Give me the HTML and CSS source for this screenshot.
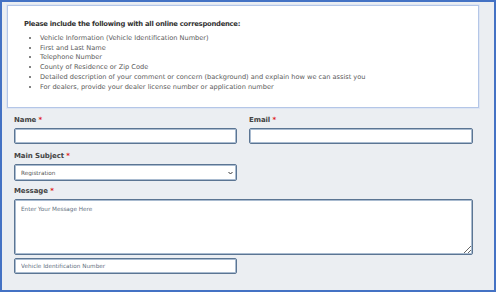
FILE: index.html
```html
<!DOCTYPE html>
<html>
<head>
    <title>Contact Us</title>
    <link rel="stylesheet" href="styles.css">
</head>
<body>
    <div class="frame">
        <div class="notice">
            <h4>Please include the following with all online correspondence:</h4>
            <ul>
                <li>Vehicle Information (Vehicle Identification Number)</li>
                <li>First and Last Name</li>
                <li>Telephone Number</li>
                <li>County of Residence or Zip Code</li>
                <li>Detailed description of your comment or concern (background) and explain how we can assist you</li>
                <li>For dealers, provide your dealer license number or application number</li>
            </ul>
        </div>
        <form class="contact-form">
            <div class="row">
                <div class="field">
                    <label for="name">Name <span class="req">*</span></label>
                    <input type="text" id="name" />
                </div>
                <div class="field">
                    <label for="email">Email <span class="req">*</span></label>
                    <input type="email" id="email" />
                </div>
            </div>
            <div class="row">
                <div class="field">
                    <label for="subject">Main Subject <span class="req">*</span></label>
                    <div class="select-wrap">
                        <select id="subject">
                            <option>Registration</option>
                            <option>Title</option>
                            <option>Dealer Services</option>
                        </select>
                        <svg class="caret" width="5" height="4" viewBox="0 0 5 4"><path d="M0.5 1 L2.5 3 L4.5 1" fill="none" stroke="#333" stroke-width="1"/></svg>
                    </div>
                </div>
            </div>
            <div class="field">
                <label for="message">Message <span class="req">*</span></label>
                <textarea id="message" placeholder="Enter Your Message Here"></textarea>
            </div>
            <div class="row">
                <div class="field">
                    <input type="text" id="vin" placeholder="Vehicle Identification Number" />
                </div>
            </div>
        </form>
    </div>
</body>
</html>
```

FILE: styles.css
```css
body {
    margin: 0;
    font-family: "DejaVu Sans", Verdana, sans-serif;
}
.frame {
    box-sizing: border-box;
    width: 496px;
    height: 292px;
    border: 2px solid #4472c4;
    background-color: #ebeef2;
    padding: 3px 15px 0 5px;
}
.notice {
    background-color: #fff;
    border: 1px solid #b4c6e7;
    box-shadow: 0 0 0 1px #dde5f3;
    height: 103px;
    box-sizing: border-box;
    padding: 14px 16px 0 16px;
}
.notice h4 {
    margin: 0 0 6px 0;
    font-size: 6.8px;
    letter-spacing: -0.25px;
    color: #333;
}
.notice ul {
    margin: 0;
    padding-left: 16px;
    list-style: disc;
}
.notice li {
    font-size: 6.6px;
    color: #5a5a5a;
    line-height: 9.7px;
}
.contact-form {
    padding: 8px 0 0 7px;
}
.row {
    display: grid;
    grid-template-columns: 223px 224px;
    column-gap: 12px;
}
.field {
    display: flex;
    flex-direction: column;
}
label {
    font-size: 7px;
    font-weight: bold;
    letter-spacing: -0.1px;
    color: #444;
    margin-bottom: 4px;
}
.req {
    color: #e02020;
}
input, select, textarea {
    display: block;
    box-sizing: border-box;
    font-family: "DejaVu Sans", Verdana, sans-serif;
    font-size: 5.7px;
    color: #555;
    background-color: #fff;
    border: 1px solid #5b7593;
    border-radius: 2px;
    box-shadow: inset 0 0 0 1px #a9bbd0;
    margin-bottom: 8px;
}
input {
    height: 16px;
    padding: 0 6px;
}
.select-wrap {
    position: relative;
}
select {
    width: 100%;
    height: 17px;
    padding: 0 6px;
    margin-bottom: 6px;
    appearance: none;
    -webkit-appearance: none;
}
.caret {
    position: absolute;
    right: 4px;
    top: 7px;
}
textarea {
    width: 459px;
    height: 56px;
    padding: 6px 6px;
    resize: vertical;
    margin-bottom: 3px;
}
::placeholder {
    color: #5f6f80;
}
```
